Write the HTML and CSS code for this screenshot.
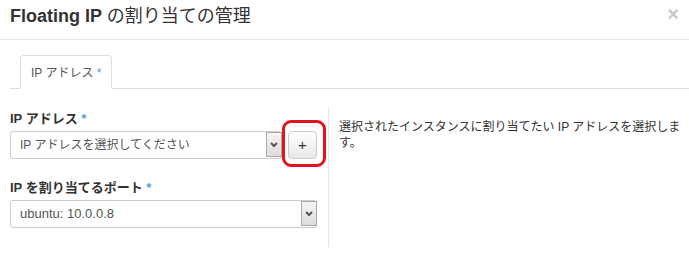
FILE: index.html
```html
<!DOCTYPE html>
<html lang="ja">
<head>
<meta charset="utf-8">
<title>Floating IP の割り当ての管理</title>
<link rel="stylesheet" href="styles.css">
</head>
<body>
<div class="modal">
  <div class="modal-header">
    <h3 class="title">Floating IP <span class="title-ja">の割り当ての管理</span></h3>
    <span class="close">×</span>
  </div>
  <div class="modal-body">
    <ul class="tabs">
      <li class="tab">IP アドレス <span class="req">*</span></li>
    </ul>
    <div class="tab-content">
      <div class="left">
        <div class="form-group">
          <label class="label">IP アドレス <span class="req">*</span></label>
          <div class="input-row">
            <div class="select">
              <span class="select-value ja">IP アドレスを選択してください</span>
              <span class="select-arrow"><svg width="8" height="6" viewBox="0 0 8 6"><polyline points="1,1 4,4 7,1" fill="none" stroke="#555" stroke-width="2"/></svg></span>
            </div>
            <div class="btn-wrap">
              <button class="btn">+</button>
              <span class="highlight"></span>
            </div>
          </div>
        </div>
        <div class="form-group">
          <label class="label">IP を割り当てるポート <span class="req">*</span></label>
          <div class="input-row">
            <div class="select">
              <span class="select-value">ubuntu: 10.0.0.8</span>
              <span class="select-arrow"><svg width="8" height="6" viewBox="0 0 8 6"><polyline points="1,1 4,4 7,1" fill="none" stroke="#555" stroke-width="2"/></svg></span>
            </div>
          </div>
        </div>
      </div>
      <div class="right">
        <p>選択されたインスタンスに割り当てたい IP アドレスを選択します。</p>
      </div>
    </div>
  </div>
</div>
</body>
</html>
```
FILE: styles.css
```css
body {
  margin: 0;
  font-family: "Liberation Sans", "Noto Sans CJK JP", sans-serif;
  color: #333;
  background: #fff;
}

.modal-header {
  display: flex;
  align-items: flex-start;
  height: 33px;
  padding: 6px 10px 0;
  border-bottom: 1px solid #e5e5e5;
}

.title {
  margin: 0;
  font-size: 18px;
  line-height: 20px;
  font-weight: bold;
  color: #333;
}

.title-ja {
  font-weight: normal;
}

.close {
  margin-left: auto;
  margin-top: -2px;
  font-size: 20px;
  line-height: 20px;
  font-weight: bold;
  color: #c8c8c8;
}

.modal-body {
  padding: 15px 0 0 10px;
}

.tabs {
  list-style: none;
  margin: 0;
  padding: 0 0 0 10px;
  display: flex;
  border-bottom: 1px solid #ddd;
}

.tab {
  font-size: 12px;
  line-height: 16px;
  padding: 9px 10px 7px;
  border: 1px solid #ddd;
  border-bottom-color: #fff;
  border-radius: 4px 4px 0 0;
  margin-bottom: -1px;
  color: #555;
  background: #fff;
}

.req {
  color: #46a6e6;
}

.tab-content {
  display: grid;
  grid-template-columns: 319px 1fr;
  padding-top: 18px;
}

.left {
  padding: 3px 11px 19px 0;
  border-right: 1px solid #e5e5e5;
}

.label {
  display: block;
  font-size: 13px;
  line-height: 18px;
  font-weight: bold;
  margin-bottom: 3px;
  color: #333;
}

.form-group + .form-group {
  margin-top: 20px;
}

.input-row {
  display: flex;
  gap: 6px;
}

.select {
  flex: 1;
  display: flex;
  height: 28px;
  box-sizing: border-box;
  border: 1px solid #ccc;
  border-radius: 3px;
  background: #fff;
}

.select-value {
  flex: 1;
  padding-left: 9px;
  font-size: 13px;
  line-height: 26px;
  color: #555;
  white-space: nowrap;
  overflow: hidden;
}

.select-value.ja {
  font-size: 12px;
}

.select-arrow {
  width: 14px;
  margin: 0 -1px 1px 0;
  border: 1px solid #a9a9a9;
  background: linear-gradient(#f5f5f5, #dcdcdc);
  display: flex;
  align-items: center;
  justify-content: center;
}

.btn-wrap {
  position: relative;
  display: flex;
}

.btn {
  width: 29px;
  height: 28px;
  box-sizing: border-box;
  border: 1px solid #ccc;
  border-radius: 4px;
  background: linear-gradient(#ffffff, #e8e8e8);
  font-family: "Liberation Sans", sans-serif;
  font-size: 15px;
  line-height: 1;
  color: #2a3140;
  padding: 0 0 1px;
}

.highlight {
  position: absolute;
  left: -6px;
  top: -11px;
  width: 44px;
  height: 47px;
  box-sizing: border-box;
  border: 3px solid #e3141e;
  border-radius: 9px;
  pointer-events: none;
}

.right {
  padding: 12px 0 0 10px;
  font-size: 12px;
  line-height: 16px;
  color: #333;
}

.right p {
  margin: 0;
}
```
